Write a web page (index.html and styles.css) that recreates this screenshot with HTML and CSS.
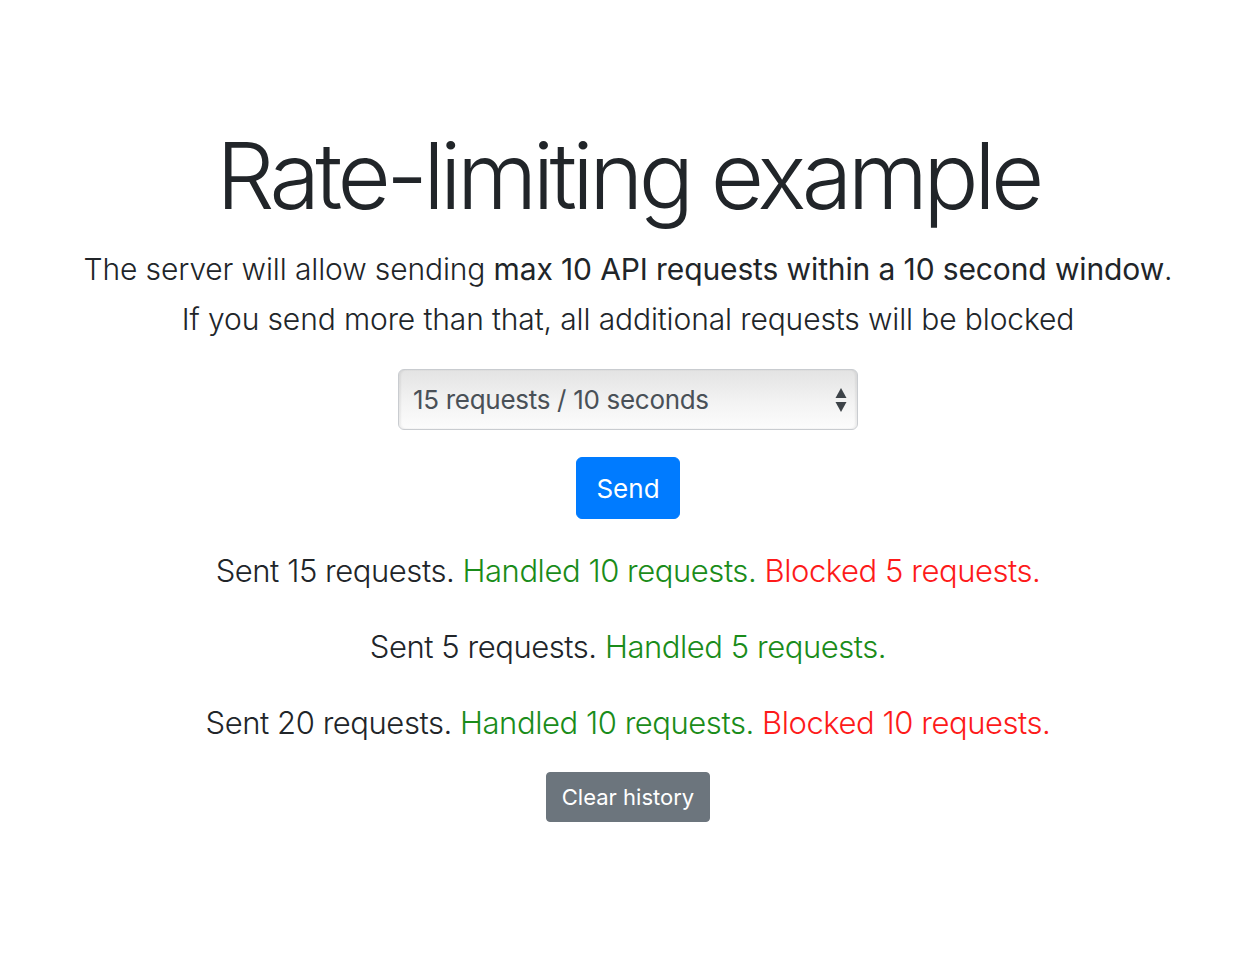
FILE: index.html
```html
<!DOCTYPE html>
<html lang="en">
<head>
<meta charset="utf-8">
<title>Rate-limiting example</title>
<link rel="stylesheet" href="styles.css">
</head>
<body>
<main class="page">
  <h1 class="title">Rate-limiting example</h1>
  <p class="lead">The server will allow sending <strong class="em">max 10 API requests within a 10 second window</strong>.<br>If you send more than that, all additional requests will be blocked</p>
  <div class="select-wrap">
    <select class="rate-select">
      <option>15 requests / 10 seconds</option>
      <option>5 requests / 10 seconds</option>
      <option>20 requests / 10 seconds</option>
    </select>
    <svg class="select-arrows" width="12" height="26" viewBox="0 0 12 26" aria-hidden="true">
      <path d="M6 1 L11.5 11 L0.5 11 Z" fill="#3d4348"/>
      <path d="M0.5 15 L11.5 15 L6 25 Z" fill="#3d4348"/>
    </svg>
  </div>
  <div class="send-row"><button class="btn btn-primary">Send</button></div>
  <div class="results">
    <p class="result">Sent 15 requests. <span class="ok">Handled 10 requests.</span> <span class="blocked">Blocked 5 requests.</span></p>
    <p class="result">Sent 5 requests. <span class="ok">Handled 5 requests.</span></p>
    <p class="result">Sent 20 requests. <span class="ok">Handled 10 requests.</span> <span class="blocked">Blocked 10 requests.</span></p>
  </div>
  <div class="clear-row"><button class="btn btn-secondary">Clear history</button></div>
</main>
</body>
</html>
```

FILE: styles.css
```css
html, body {
  margin: 0;
  padding: 0;
  background: #fff;
}
body {
  font-family: "Inter", "Noto Sans", sans-serif;
  color: #212529;
}
.page {
  display: flex;
  flex-direction: column;
  align-items: center;
  text-align: center;
  padding-top: 121px;
  padding-left: 4px;
}
.title {
  margin: 0;
  font-size: 92px;
  font-weight: 300;
  line-height: 1.2;
  letter-spacing: -4.6px;
}
.lead {
  margin: 13px 0 0;
  font-size: 30px;
  font-weight: 300;
  line-height: 50px;
  letter-spacing: -0.12px;
}
.em {
  font-weight: 400;
}
.select-wrap {
  position: relative;
  margin-top: 25px;
  width: 460px;
  height: 61px;
}
.rate-select {
  -webkit-appearance: none;
  appearance: none;
  width: 100%;
  height: 100%;
  box-sizing: border-box;
  padding: 0 40px 0 14px;
  border: 1px solid #c9ccd0;
  border-radius: 6px;
  background: linear-gradient(#e3e3e3, #f3f3f3 55%, #fcfcfc);
  box-shadow: inset 2px 0 2px rgba(0,0,0,0.06), inset -2px 0 2px rgba(0,0,0,0.06);
  font-family: "Inter", "Noto Sans", sans-serif;
  font-size: 26px;
  font-weight: 400;
  letter-spacing: -0.3px;
  color: #495057;
  outline: none;
}
.select-arrows {
  position: absolute;
  right: 11px;
  top: 18px;
  pointer-events: none;
}
.send-row {
  margin-top: 27px;
}
.btn {
  border: 1px solid transparent;
  font-family: "Inter", "Noto Sans", sans-serif;
  font-weight: 400;
  color: #fff;
  cursor: pointer;
  box-sizing: border-box;
  padding: 0;
}
.btn-primary {
  width: 104px;
  height: 62px;
  border-radius: 6px;
  background: #007bff;
  border-color: #007bff;
  font-size: 26px;
}
.results {
  margin-top: 29px;
  display: flex;
  flex-direction: column;
  gap: 30px;
}
.result {
  margin: 0;
  font-size: 31px;
  font-weight: 300;
  line-height: 46px;
  letter-spacing: -0.45px;
}
.ok {
  color: #1a8c1a;
}
.blocked {
  color: #fd1a1a;
}
.clear-row {
  margin-top: 26px;
}
.btn-secondary {
  width: 164px;
  height: 50px;
  border-radius: 4px;
  background: #6c757d;
  border-color: #6c757d;
  font-size: 22px;
}
```
